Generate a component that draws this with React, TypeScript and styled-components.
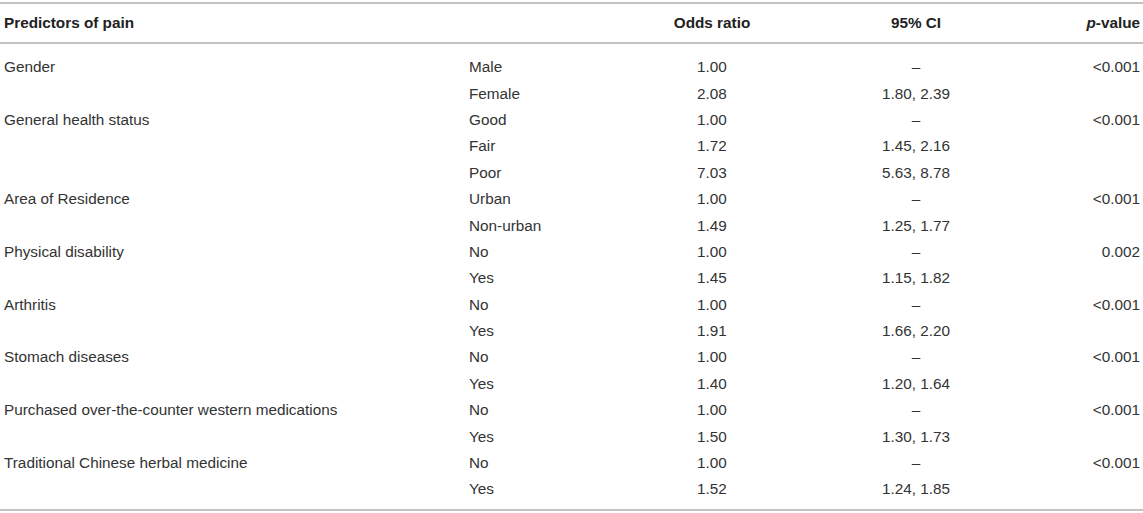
import React from "react";
import styled, { createGlobalStyle } from "styled-components";

const Global = createGlobalStyle`
  html, body { margin: 0; padding: 0; background: #fff; }
  body { font-family: "Liberation Sans", Arial, Helvetica, sans-serif; color: #333; }
`;

const Table = styled.div`
  margin-top: 2px;
  width: 1143px;
  border-top: 2px solid #c2c2c2;
  border-bottom: 2px solid #c2c2c2;
  font-size: 15.3px;
`;

const Row = styled.div<{ $head?: boolean }>`
  display: grid;
  grid-template-columns: 465px 147px 200px 208px 123px;
  align-items: center;
  height: ${(p) => (p.$head ? "38px" : "26.4px")};
  font-weight: ${(p) => (p.$head ? 700 : 400)};
  color: ${(p) => (p.$head ? "#222" : "#333")};
  ${(p) => (p.$head ? "border-bottom: 2px solid #c2c2c2;" : "")}
`;

const Body = styled.div`
  padding: 10px 0 6px;
`;

const Cell = styled.div<{ $align?: "left" | "center" | "right" }>`
  text-align: ${(p) => p.$align || "left"};
  padding: ${(p) => (p.$align === "right" ? "0 3px 0 0" : p.$align === "center" ? "0" : "0 0 0 4px")};
  white-space: nowrap;
`;

const rows: [string, string, string, string, string][] = [
  ["Gender", "Male", "1.00", "–", "<0.001"],
  ["", "Female", "2.08", "1.80, 2.39", ""],
  ["General health status", "Good", "1.00", "–", "<0.001"],
  ["", "Fair", "1.72", "1.45, 2.16", ""],
  ["", "Poor", "7.03", "5.63, 8.78", ""],
  ["Area of Residence", "Urban", "1.00", "–", "<0.001"],
  ["", "Non-urban", "1.49", "1.25, 1.77", ""],
  ["Physical disability", "No", "1.00", "–", "0.002"],
  ["", "Yes", "1.45", "1.15, 1.82", ""],
  ["Arthritis", "No", "1.00", "–", "<0.001"],
  ["", "Yes", "1.91", "1.66, 2.20", ""],
  ["Stomach diseases", "No", "1.00", "–", "<0.001"],
  ["", "Yes", "1.40", "1.20, 1.64", ""],
  ["Purchased over-the-counter western medications", "No", "1.00", "–", "<0.001"],
  ["", "Yes", "1.50", "1.30, 1.73", ""],
  ["Traditional Chinese herbal medicine", "No", "1.00", "–", "<0.001"],
  ["", "Yes", "1.52", "1.24, 1.85", ""],
];

export default function App() {
  return (
    <>
      <Global />
      <Table>
        <Row $head>
          <Cell>Predictors of pain</Cell>
          <Cell />
          <Cell $align="center">Odds ratio</Cell>
          <Cell $align="center">95% CI</Cell>
          <Cell $align="right">
            <i>p</i>-value
          </Cell>
        </Row>
        <Body>
          {rows.map((r, i) => (
            <Row key={i}>
              <Cell>{r[0]}</Cell>
              <Cell>{r[1]}</Cell>
              <Cell $align="center">{r[2]}</Cell>
              <Cell $align="center">{r[3]}</Cell>
              <Cell $align="right">{r[4]}</Cell>
            </Row>
          ))}
        </Body>
      </Table>
    </>
  );
}
